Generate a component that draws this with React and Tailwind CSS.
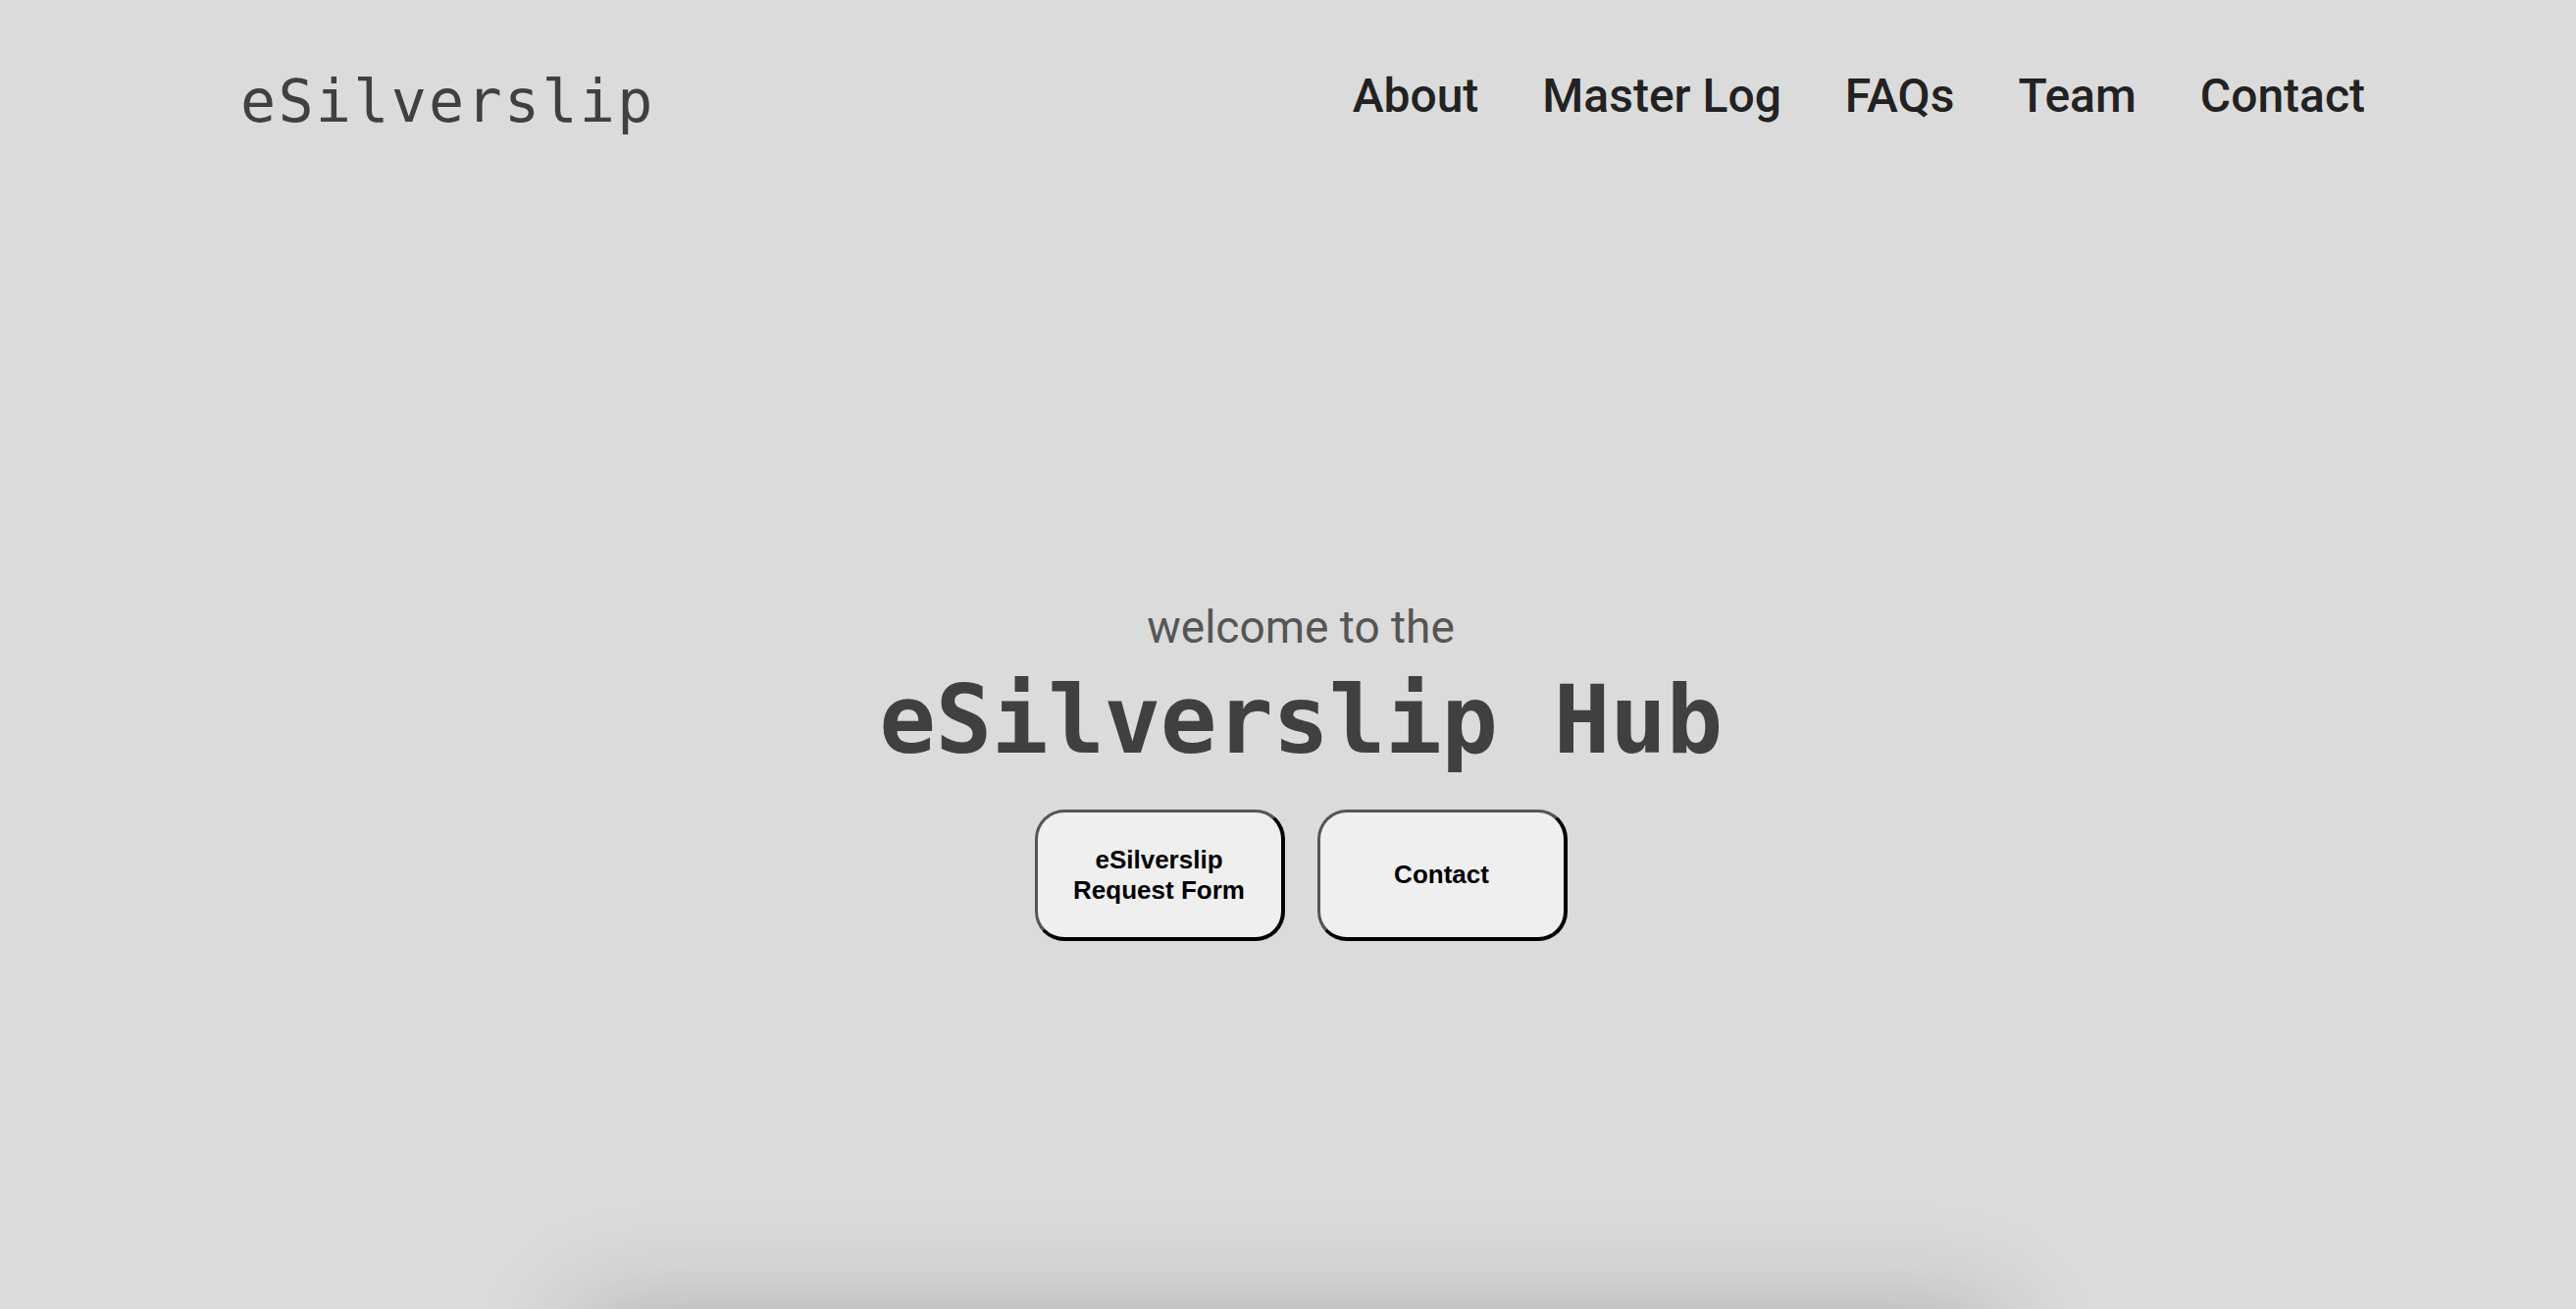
const navLinks = ['About', 'Master Log', 'FAQs', 'Team', 'Contact']

const mono = { fontFamily: '"DejaVu Sans Mono", "Liberation Mono", monospace' }

function HubButton({ children }) {
  return (
    <button className="flex h-[134px] w-[255px] items-center justify-center rounded-[30px] border-[3px] border-r-4 border-b-4 border-[#555] border-r-black border-b-black bg-[#efefef] px-4 text-center font-['Liberation_Sans',Arial,sans-serif] text-[26px] font-bold leading-[31px] text-black">
      {children}
    </button>
  )
}

export default function App() {
  return (
    <div className="h-[1334px] overflow-hidden bg-[#dbdbdb] font-['Roboto',sans-serif]">
      <header className="flex h-[170px] items-start justify-between pl-[245px] pr-[215px]">
        <a
          href="#"
          className="mt-[68px] text-[60px] leading-[70px] tracking-[2.3px] text-[#404040]"
          style={mono}
        >
          eSilverslip
        </a>
        <nav className="mt-[70px] flex gap-[65px]">
          {navLinks.map((link) => (
            <a key={link} href="#" className="text-[48px] font-medium leading-[56px] text-[#222]">
              {link}
            </a>
          ))}
        </nav>
      </header>

      <section className="flex h-[1164px] flex-col items-center pl-[26px] pt-[442px]">
        <p className="text-[46px] leading-[54px] text-[#555]">welcome to the</p>
        <h1
          className="mt-[12px] text-[96px] font-bold leading-[112px] tracking-[-0.5px] text-[#404040]"
          style={mono}
        >
          eSilverslip Hub
        </h1>
        <div className="mt-[35px] flex gap-[33px]">
          <HubButton>
            eSilverslip
            <br />
            Request Form
          </HubButton>
          <HubButton>Contact</HubButton>
        </div>
      </section>

      <section className="mx-auto h-[400px] w-[1446px] bg-[#dbdbdb] shadow-[0_0_100px_rgba(0,0,0,0.2)]" />
    </div>
  )
}
